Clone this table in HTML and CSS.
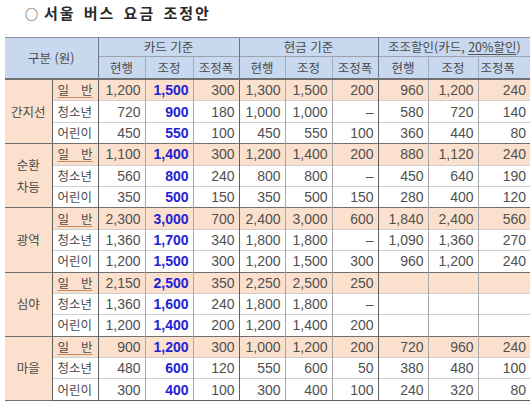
FILE: index.html
```html
<!DOCTYPE html>
<html lang="ko">
<head>
<meta charset="utf-8">
<link rel="stylesheet" href="styles.css">
</head>
<body>
<h1 class="title"><span class="bullet">○</span>서울 버스 요금 조정안</h1>
<table class="fare">
  <colgroup>
    <col class="c-grp"><col class="c-sub">
    <col class="c47"><col class="c48"><col class="c46">
    <col class="c46"><col class="c47"><col class="c46">
    <col class="c50"><col class="c50"><col class="c52">
  </colgroup>
  <thead>
    <tr class="h1">
      <th colspan="2" rowspan="2" class="gl">구분 (원)</th>
      <th colspan="3" class="gl">카드 기준</th>
      <th colspan="3" class="gl">현금 기준</th>
      <th colspan="3" class="gl">조조할인(카드, <span class="ul">20%할인</span>)</th>
    </tr>
    <tr class="h2">
      <th class="gl">현행</th><th>조정</th><th>조정폭</th>
      <th class="gl">현행</th><th>조정</th><th>조정폭</th>
      <th class="gl">현행</th><th>조정</th><th class="left">조정폭</th>
    </tr>
  </thead>
  <tbody>
    <tr class="gen first"><td rowspan="3" class="grp">간지선</td><td class="sub gen-l"><span>일 반</span></td><td class="gl">1,200</td><td class="blue">1,500</td><td>300</td><td class="gl">1,300</td><td>1,500</td><td>200</td><td class="gl">960</td><td>1,200</td><td>240</td></tr>
    <tr><td class="sub">청소년</td><td class="gl">720</td><td class="blue">900</td><td>180</td><td class="gl">1,000</td><td>1,000</td><td>–</td><td class="gl">580</td><td>720</td><td>140</td></tr>
    <tr><td class="sub">어린이</td><td class="gl">450</td><td class="blue">550</td><td>100</td><td class="gl">450</td><td>550</td><td>100</td><td class="gl">360</td><td>440</td><td>80</td></tr>

    <tr class="gen first"><td rowspan="3" class="grp">순환<br>차등</td><td class="sub gen-l"><span>일 반</span></td><td class="gl">1,100</td><td class="blue">1,400</td><td>300</td><td class="gl">1,200</td><td>1,400</td><td>200</td><td class="gl">880</td><td>1,120</td><td>240</td></tr>
    <tr><td class="sub">청소년</td><td class="gl">560</td><td class="blue">800</td><td>240</td><td class="gl">800</td><td>800</td><td>–</td><td class="gl">450</td><td>640</td><td>190</td></tr>
    <tr><td class="sub">어린이</td><td class="gl">350</td><td class="blue">500</td><td>150</td><td class="gl">350</td><td>500</td><td>150</td><td class="gl">280</td><td>400</td><td>120</td></tr>

    <tr class="gen first"><td rowspan="3" class="grp">광역</td><td class="sub gen-l"><span>일 반</span></td><td class="gl">2,300</td><td class="blue">3,000</td><td>700</td><td class="gl">2,400</td><td>3,000</td><td>600</td><td class="gl">1,840</td><td>2,400</td><td>560</td></tr>
    <tr><td class="sub">청소년</td><td class="gl">1,360</td><td class="blue">1,700</td><td>340</td><td class="gl">1,800</td><td>1,800</td><td>–</td><td class="gl">1,090</td><td>1,360</td><td>270</td></tr>
    <tr><td class="sub">어린이</td><td class="gl">1,200</td><td class="blue">1,500</td><td>300</td><td class="gl">1,200</td><td>1,500</td><td>300</td><td class="gl">960</td><td>1,200</td><td>240</td></tr>

    <tr class="gen first"><td rowspan="3" class="grp">심야</td><td class="sub gen-l"><span>일 반</span></td><td class="gl">2,150</td><td class="blue">2,500</td><td>350</td><td class="gl">2,250</td><td>2,500</td><td>250</td><td class="gl"></td><td></td><td></td></tr>
    <tr><td class="sub">청소년</td><td class="gl">1,360</td><td class="blue">1,600</td><td>240</td><td class="gl">1,800</td><td>1,800</td><td>–</td><td class="gl"></td><td></td><td></td></tr>
    <tr><td class="sub">어린이</td><td class="gl">1,200</td><td class="blue">1,400</td><td>200</td><td class="gl">1,200</td><td>1,400</td><td>200</td><td class="gl"></td><td></td><td></td></tr>

    <tr class="gen first"><td rowspan="3" class="grp">마을</td><td class="sub gen-l"><span>일 반</span></td><td class="gl">900</td><td class="blue">1,200</td><td>300</td><td class="gl">1,000</td><td>1,200</td><td>200</td><td class="gl">720</td><td>960</td><td>240</td></tr>
    <tr><td class="sub">청소년</td><td class="gl">480</td><td class="blue">600</td><td>120</td><td class="gl">550</td><td>600</td><td>50</td><td class="gl">380</td><td>480</td><td>100</td></tr>
    <tr class="last"><td class="sub">어린이</td><td class="gl">300</td><td class="blue">400</td><td>100</td><td class="gl">300</td><td>400</td><td>100</td><td class="gl">240</td><td>320</td><td>80</td></tr>
  </tbody>
</table>
</body>
</html>
```
FILE: styles.css
```css
html, body {
  margin: 0;
  padding: 0;
  background: #ffffff;
}
body {
  width: 530px;
  height: 402px;
  overflow: hidden;
}
.title {
  margin: 0;
  padding: 3px 0 0 25px;
  height: 37px;
  box-sizing: border-box;
  font-family: "Noto Sans CJK KR", sans-serif;
  font-size: 15px;
  font-weight: 700;
  letter-spacing: 2px;
  word-spacing: 2px;
  line-height: 20px;
  color: #2a2a2a;
}
.bullet {
  font-weight: 400;
  font-size: 13px;
  margin-right: 6px;
  letter-spacing: 0;
}
.fare {
  margin-left: 5px;
  border-collapse: collapse;
  table-layout: fixed;
  width: 525px;
  font-family: "Liberation Sans", "Noto Sans CJK KR", sans-serif;
  font-size: 14px;
  color: #505050;
}
.c-grp { width: 47px; }
.c-sub { width: 46px; }
.c46 { width: 46px; }
.c47 { width: 47px; }
.c48 { width: 48px; }
.c50 { width: 50px; }
.c52 { width: 52px; }

.fare th {
  background: #c8d8ef;
  font-weight: 400;
  font-family: "Noto Sans CJK KR", sans-serif;
  font-size: 12.5px;
  color: #4a4a4a;
  padding: 0;
  text-align: center;
  border-left: 1px solid #a4acb8;
  border-top: 1px solid #9aa2b0;
  line-height: 16px;
}
.fare th.gl {
  border-left: 1px solid #6f7784;
}
.fare th.left {
  text-align: left;
  padding-left: 2px;
}
.fare thead tr.h1 th {
  border-top: 1px solid #8a94a4;
  height: 18px;
}
.fare thead tr.h1 th:first-child { border-left: none; }
.fare thead tr.h2 th {
  height: 21px;
  border-bottom: 2px solid #707070;
}
.ul {
  text-decoration: underline;
  text-decoration-color: #555;
  text-underline-offset: 2px;
}

.fare td {
  padding: 0 4px 0 0;
  text-align: right;
  height: 20.4px;
  line-height: 16px;
  border-left: 1px solid #a8a8a8;
  border-top: 1px solid #cfcfcf;
  white-space: nowrap;
}
.fare td.gl { border-left: 1px solid #606060; }
.fare tr.gen td { background: #fbe0cd; }
.fare tr.first td { border-top: 1px solid #707070; }
.fare tbody tr:first-child td { border-top: 2px solid #707070; }
.fare tr.last td { border-bottom: 1px solid #606060; }

.fare td.grp {
  background: #ffffff;
  border-left: none;
  border-bottom: 1px solid #707070;
  text-align: center;
  padding: 0;
  font-family: "Noto Sans CJK KR", sans-serif;
  font-size: 12.5px;
  line-height: 22px;
  color: #4a4a4a;
}
.fare td.sub {
  border-left: 1px solid #606060;
  text-align: left;
  padding: 0 5px;
  font-family: "Noto Sans CJK KR", sans-serif;
  font-size: 12.5px;
  color: #4a4a4a;
}
.fare td.gen-l {
  text-align: justify;
  text-align-last: justify;
}
.fare td.gen-l span {
  display: block;
  text-decoration: underline;
  text-decoration-color: #c98a62;
  text-underline-offset: 2px;
}
.fare td.blue {
  color: #2323d4;
  font-weight: 700;
}
```
